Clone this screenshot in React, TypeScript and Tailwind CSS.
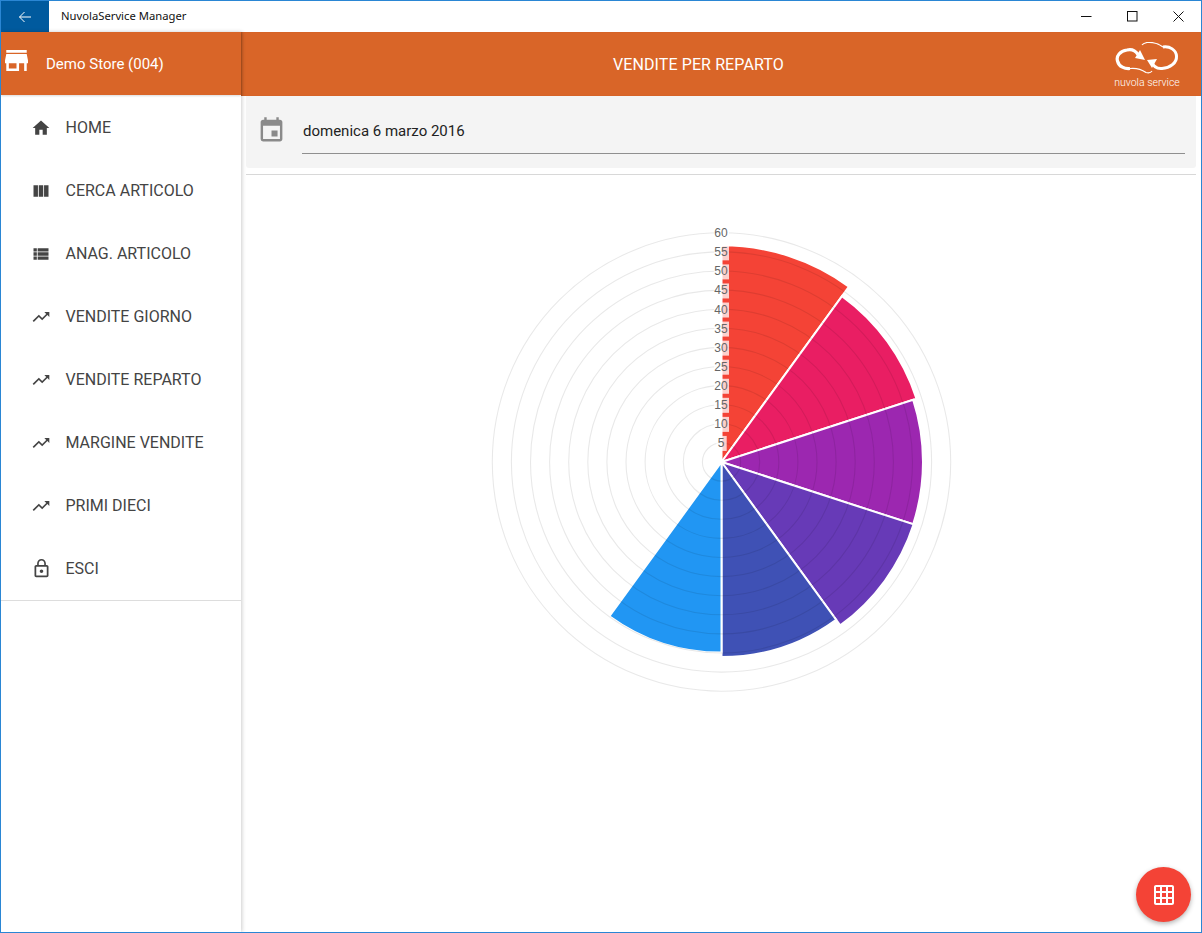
import React from "react";
import { MdHome, MdViewColumn, MdViewList, MdTrendingUp, MdLockOutline, MdEvent, MdGridOn } from "react-icons/md";

const U = 19.1;
const LABEL_U = 19.06;
const CX = 230.5;
const CY = 230;

function wedge(r: number, a0: number, a1: number) {
  const p = (a: number) => {
    const t = (a * Math.PI) / 180;
    return `${(CX + r * Math.sin(t)).toFixed(2)} ${(CY - r * Math.cos(t)).toFixed(2)}`;
  };
  return `M${CX} ${CY} L${p(a0)} A${r} ${r} 0 0 1 ${p(a1)} Z`;
}

const slices = [
  { r: 216.8, c: "#F44336" },
  { r: 205, c: "#E91E63" },
  { r: 201.5, c: "#9C27B0" },
  { r: 202, c: "#673AB7" },
  { r: 195, c: "#3F51B5" },
  { r: 190.6, c: "#2196F3" },
];

function Chart() {
  const rings = Array.from({ length: 12 }, (_, i) => i + 1);
  return (
    <svg width="460" height="460" viewBox="0 0 460 460" className="block overflow-visible">
      {slices.map((s, i) => (
        <path key={i} d={wedge(s.r, i * 36, (i + 1) * 36)} fill={s.c} stroke="#fff" strokeWidth="2" strokeLinejoin="miter" />
      ))}
      {rings.map((n) => (
        <circle key={n} cx={CX} cy={CY} r={n * U} fill="none" stroke="rgba(0,0,0,0.09)" strokeWidth="1.1" />
      ))}
      {rings.map((n) => {
        const y = CY - n * LABEL_U;
        const hw = n === 1 ? 5.2 : 7.5;
        return (
          <g key={n}>
            <rect x={CX - hw} y={y - 7} width={hw * 2} height={15} fill={n === 12 ? "#fff" : "rgba(255,255,255,0.75)"} />
            <text x={CX - 0.5} y={y + 4} textAnchor="middle" fontFamily="'Liberation Sans', Arial, sans-serif" fontSize="12" fill="#666">
              {n * 5}
            </text>
          </g>
        );
      })}
    </svg>
  );
}

const items = [
  { t: "HOME", I: MdHome, s: 20 },
  { t: "CERCA ARTICOLO", I: MdViewColumn, s: 20 },
  { t: "ANAG. ARTICOLO", I: MdViewList, s: 20 },
  { t: "VENDITE GIORNO", I: MdTrendingUp, s: 20 },
  { t: "VENDITE REPARTO", I: MdTrendingUp, s: 20 },
  { t: "MARGINE VENDITE", I: MdTrendingUp, s: 20 },
  { t: "PRIMI DIECI", I: MdTrendingUp, s: 20 },
  { t: "ESCI", I: MdLockOutline, s: 21 },
];

function Logo() {
  return (
    <div className="flex flex-col items-center w-[66px] mt-[2px]">
      <svg width="64" height="32" viewBox="0 0 64 32" fill="none" stroke="#fff" className="block">
        <path d="M23 12.500 C20 8 16 7 12 8 C5 9 1 14 2.500 19 C4 25 10 27 15 26.500" strokeWidth="3.200" />
        <path d="M15 26.500 C20 26 26 27 31 30.500 C33 31 36 30.500 37 29" strokeWidth="1.200" />
        <path d="M36 19 C38 24 42 27 47 26.500 C55 26 62 21 61.500 14 C61 8 55 4 48 5" strokeWidth="3" />
        <path d="M48 5 C44 2 38 0 32 0.500 C30 1 28 1.500 27 3" strokeWidth="1.200" />
        <path d="M25 8 L30 18 L20 16 Z" fill="#fff" stroke="none" />
        <path d="M32 18 L42 17 L37 26 Z" fill="#fff" stroke="none" />
      </svg>
      <span className="mt-[3px] text-[10.5px] leading-[11px] text-white whitespace-nowrap font-['Roboto',sans-serif] font-light">nuvola service</span>
    </div>
  );
}

export default function App() {
  return (
    <div className="w-[1202px] h-[933px] overflow-hidden border border-[#2a86d4] bg-white flex flex-col font-['Roboto',sans-serif]">
      <div className="h-[31px] shrink-0 flex items-center bg-white">
        <div className="w-[48px] h-full bg-[#005a9e] flex items-center justify-center text-white">
          <svg width="14" height="12" viewBox="0 0 14 12" fill="none" stroke="#fff" strokeWidth="1">
            <path d="M13 6H1.500M6.500 1L1.500 6L6.500 11" />
          </svg>
        </div>
        <span className="ml-3 text-[11.25px] text-[#111] font-['Noto_Sans','Open_Sans',sans-serif]">NuvolaService Manager</span>
        <div className="ml-auto flex h-full">
          {[
            <path key="a" d="M0 5.500H10.500" />,
            <rect key="b" x="0.500" y="0.500" width="9.500" height="9.500" />,
            <path key="c" d="M0.500 0.500L10.500 10.500M10.500 0.500L0.500 10.500" />,
          ].map((p, i) => (
            <div key={i} className="w-[46px] h-full flex items-center justify-center">
              <svg width="11" height="11" viewBox="0 0 11 11" fill="none" stroke="#111" strokeWidth="1">
                {p}
              </svg>
            </div>
          ))}
        </div>
      </div>
      <div className="flex-1 flex min-h-0 relative">
        <aside className="w-[240px] shrink-0 flex flex-col bg-white shadow-[1px_0_4px_rgba(0,0,0,0.2)] z-10">
          <div className="h-[63px] bg-[#d96528] flex items-center text-white shadow-[0_1px_2px_rgba(0,0,0,0.15)]">
            <svg width="23" height="21" viewBox="3 4 18 16" preserveAspectRatio="none" fill="#fff" className="ml-[4px] -mt-[6px] shrink-0">
              <path d="M20 4H4v2h16V4zm1 10v-2l-1-5H4l-1 5v2h1v6h10v-6h4v6h2v-6h1zm-9 4H6v-4h6v4z" />
            </svg>
            <span className="ml-[18px] text-[15px] mt-[1px]">Demo Store (004)</span>
          </div>
          <nav className="border-b border-[#ddd] pt-[1px]">
            {items.map(({ t, I, s }) => (
              <div key={t} className="h-[63px] flex items-center text-[#444]">
                <div className="w-[20px] ml-[30px] flex justify-center">
                  <I size={s} className="shrink-0" />
                </div>
                <span className="ml-[14.5px] text-base">{t}</span>
              </div>
            ))}
          </nav>
        </aside>
        <main className="flex-1 flex flex-col min-w-0 relative">
          <div className="h-[64px] bg-[#d96528] flex items-center justify-between text-white shrink-0 pl-[372px] pr-[21px] shadow-[inset_2px_0_3px_-2px_rgba(0,0,0,0.3)]">
            <span className="text-base mt-[1px] tracking-[0.1px]">VENDITE PER REPARTO</span>
            <Logo />
          </div>
          <div className="mx-[5px] h-[72px] bg-[#f4f4f4] rounded-b-[3px] flex items-start pl-[11px] pr-[11px] shrink-0">
            <MdEvent size={29} className="text-[#8a8a8a] mt-[20px] shrink-0" />
            <div className="ml-[16px] flex-1 h-[46px] mt-[12px] border-b border-[#8f8f8f] flex items-center pl-[1px]">
              <span className="text-[15px] text-[#222] mt-[2px]">domenica 6 marzo 2016</span>
            </div>
          </div>
          <div className="mx-[5px] mt-[6px] border-t border-[#d8d8d8]" />
          <div className="pl-[250px] pt-[57px]">
            <Chart />
          </div>
          <button className="absolute right-[10px] bottom-[10px] w-[55px] h-[55px] rounded-full bg-[#F44336] flex items-center justify-center text-white shadow-[0_2px_5px_rgba(0,0,0,0.3)]">
            <MdGridOn size={24} />
          </button>
        </main>
      </div>
    </div>
  );
}
